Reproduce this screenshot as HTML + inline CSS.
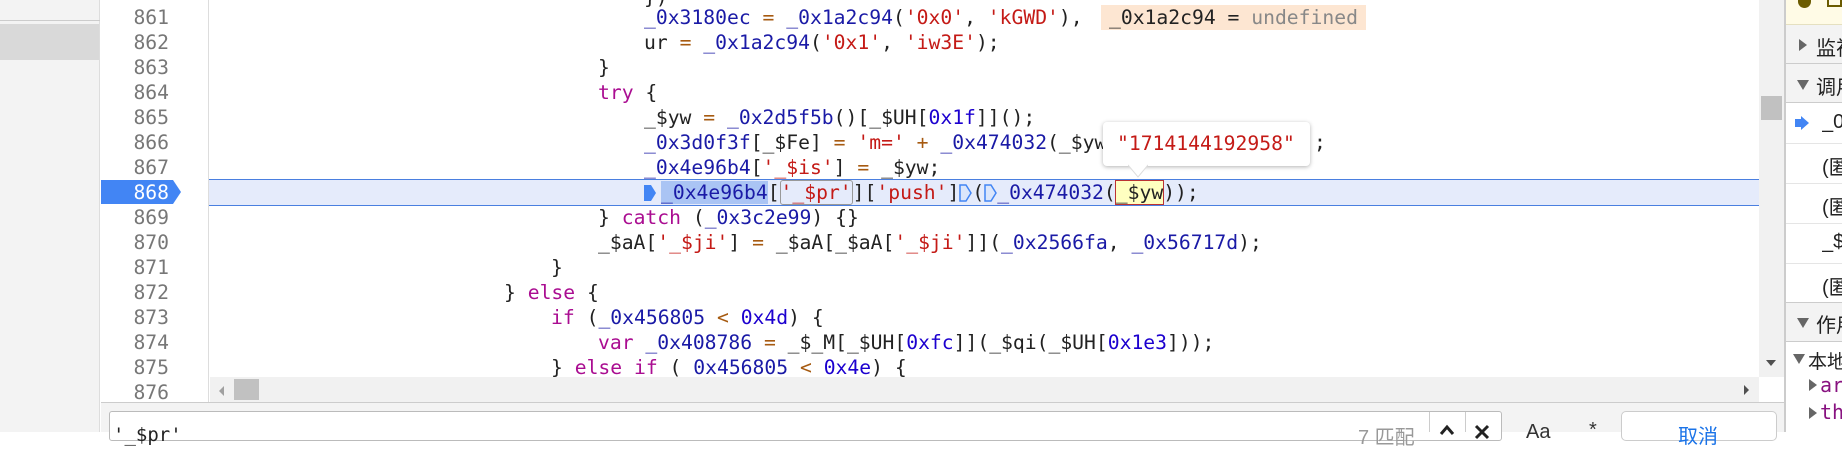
<!DOCTYPE html>
<html><head><meta charset="utf-8"><style>
*{margin:0;padding:0;box-sizing:border-box}
body{width:1842px;height:432px;overflow:hidden;background:#fff;position:relative;font-family:"DejaVu Sans Mono","Liberation Mono",monospace}
.a{position:absolute}
.code{position:absolute;left:209px;top:0;width:1550px;height:377px;overflow:hidden}
.ln{position:absolute;height:25px;line-height:25px;font-size:19.7px;white-space:pre;color:#222}
.v{color:#1a1aa6}.o{color:#a65a10}.s{color:#c41a16}.k{color:#aa0d91}.n{color:#1c00cf}
.num{position:absolute;left:100px;width:69px;text-align:right;height:25px;line-height:25px;font-size:19.7px;color:#777}
.cjk{font-family:"Liberation Sans","Noto Sans CJK SC",sans-serif}
.rp{position:absolute;left:1785px;width:57px;font-size:20px;color:#222;white-space:nowrap;overflow:hidden;font-family:"Liberation Sans","Noto Sans CJK SC",sans-serif}
</style></head><body>
<div class="a" style="left:0;top:0;width:100px;height:432px;background:#f3f3f3;border-right:1px solid #ddd"></div>
<div class="a" style="left:0;top:20px;width:100px;height:1px;background:#ccc"></div>
<div class="a" style="left:0;top:24px;width:99px;height:36px;background:#d9d9d9"></div>
<div class="a" style="left:100px;top:0;width:109px;height:402px;background:#fff;border-right:1px solid #ddd"></div>
<div class="num" style="top:5px">861</div>
<div class="num" style="top:30px">862</div>
<div class="num" style="top:55px">863</div>
<div class="num" style="top:80px">864</div>
<div class="num" style="top:105px">865</div>
<div class="num" style="top:130px">866</div>
<div class="num" style="top:155px">867</div>
<svg class="a" style="left:101px;top:180px" width="81" height="24"><path d="M0 0H72L80 12L72 24H0Z" fill="#4285f4"/></svg>
<div class="num" style="top:180px;color:#fff">868</div>
<div class="num" style="top:205px">869</div>
<div class="num" style="top:230px">870</div>
<div class="num" style="top:255px">871</div>
<div class="num" style="top:280px">872</div>
<div class="num" style="top:305px">873</div>
<div class="num" style="top:330px">874</div>
<div class="num" style="top:355px">875</div>
<div class="num" style="top:380px">876</div>
<div class="code">
<div class="a" style="left:0;top:179px;width:1550px;height:27px;background:#e5ebfb;border-top:1px solid #4a7fe0;border-bottom:1px solid #4a7fe0"></div>
<div class="ln" style="left:435px;top:-15px">})</div>
<div class="ln" style="left:435px;top:5px"><span class="v">_0x3180ec</span> <span class="o">=</span> <span class="v">_0x1a2c94</span>(<span class="s">'0x0'</span>, <span class="s">'kGWD'</span>),</div>
<div class="ln" style="left:892px;top:5px;background:#fde6d2;padding:0 8px">_0x1a2c94 = <span style="color:#888">undefined</span></div>
<div class="ln" style="left:435px;top:30px">ur <span class="o">=</span> <span class="v">_0x1a2c94</span>(<span class="s">'0x1'</span>, <span class="s">'iw3E'</span>);</div>
<div class="ln" style="left:389px;top:55px">}</div>
<div class="ln" style="left:389px;top:80px"><span class="k">try</span> {</div>
<div class="ln" style="left:435px;top:105px">_$yw <span class="o">=</span> <span class="v">_0x2d5f5b</span>()[_$UH[<span class="n">0x1f</span>]]();</div>
<div class="ln" style="left:435px;top:130px"><span class="v">_0x3d0f3f</span>[_$Fe] <span class="o">=</span> <span class="s">'m='</span> <span class="o">+</span> <span class="v">_0x474032</span>(_$yw</div>
<div class="ln" style="left:1105px;top:130px">;</div>
<div class="ln" style="left:435px;top:155px"><span class="v">_0x4e96b4</span>[<span class="s">'_$is'</span>] <span class="o">=</span> _$yw;</div>
<div class="ln" style="left:435px;top:180px"><svg width="13" height="18" style="vertical-align:-3px"><path d="M0 1H7L12 9L7 17H0Z" fill="#4285f4"/></svg><span class="v" style="background:#aac4f4;margin-left:4px">_0x4e96b4</span>[<span class="s" style="border:1px solid #999;border-radius:3px">'_$pr'</span>][<span class="s">'push'</span>]<svg width="13" height="18" style="vertical-align:-3px"><path d="M1 1H7L12 9L7 17H1Z" fill="#dbe6fb" stroke="#4285f4" stroke-width="1.5"/></svg>(<svg width="13" height="18" style="vertical-align:-3px"><path d="M1 1H7L12 9L7 17H1Z" fill="#dbe6fb" stroke="#4285f4" stroke-width="1.5"/></svg><span class="v">_0x474032</span>(<span style="background:#ffffc0;outline:1px solid #b33">_$yw</span>));</div>
<div class="ln" style="left:389px;top:205px">} <span class="k">catch</span> (<span class="v">_0x3c2e99</span>) {}</div>
<div class="ln" style="left:389px;top:230px">_$aA[<span class="s">'_$ji'</span>] <span class="o">=</span> _$aA[_$aA[<span class="s">'_$ji'</span>]](<span class="v">_0x2566fa</span>, <span class="v">_0x56717d</span>);</div>
<div class="ln" style="left:342px;top:255px">}</div>
<div class="ln" style="left:295px;top:280px">} <span class="k">else</span> {</div>
<div class="ln" style="left:342px;top:305px"><span class="k">if</span> (<span class="v">_0x456805</span> <span class="o">&lt;</span> <span class="n">0x4d</span>) {</div>
<div class="ln" style="left:389px;top:330px"><span class="k">var</span> <span class="v">_0x408786</span> <span class="o">=</span> _$_M[_$UH[<span class="n">0xfc</span>]](_$qi(_$UH[<span class="n">0x1e3</span>]));</div>
<div class="ln" style="left:342px;top:355px">} <span class="k">else if</span> (<span class="v">_0x456805</span> <span class="o">&lt;</span> <span class="n">0x4e</span>) {</div>
</div>
<div class="a" style="left:1103px;top:122px;width:207px;height:44px;background:#fff;border-radius:4px;box-shadow:0 1px 4px rgba(0,0,0,.3)"></div>
<svg class="a" style="left:1128px;top:164px" width="20" height="14"><path d="M0 1L10 13L20 1Z" fill="#fff"/><path d="M0 1L10 13L20 1" fill="none" stroke="#ddd"/></svg>
<div class="ln" style="left:1117px;top:131px;color:#c41a16">"1714144192958"</div>
<div class="a" style="left:1759px;top:0;width:26px;height:377px;background:#f1f1f1"></div>
<div class="a" style="left:1761px;top:96px;width:21px;height:24px;background:#c1c1c1"></div>
<svg class="a" style="left:1764px;top:358px" width="14" height="10"><path d="M2 2H12L7 8Z" fill="#505050"/></svg>
<div class="a" style="left:210px;top:377px;width:1549px;height:25px;background:#f1f1f1"></div>
<div class="a" style="left:1759px;top:377px;width:26px;height:25px;background:#fff"></div>
<svg class="a" style="left:216px;top:384px" width="10" height="14"><path d="M8 2V12L3 7Z" fill="#a0a0a0"/></svg>
<div class="a" style="left:234px;top:379px;width:25px;height:21px;background:#c1c1c1"></div>
<svg class="a" style="left:1742px;top:383px" width="10" height="14"><path d="M2 2V12L7 7Z" fill="#505050"/></svg>
<div class="a" style="left:101px;top:402px;width:1684px;height:30px;background:#f3f3f3;border-top:1px solid #ccc"></div>
<div class="a" style="left:109px;top:411px;width:1393px;height:30px;background:#fff;border:1px solid #bbb;border-radius:3px"></div>
<div class="ln" style="left:113px;top:423px;font-size:19px">'_$pr'</div>
<div class="a cjk" style="left:1358px;top:421px;font-size:20px;color:#999">7 匹配</div>
<div class="a" style="left:1429px;top:412px;width:1px;height:20px;background:#ccc"></div>
<div class="a" style="left:1465px;top:412px;width:1px;height:20px;background:#ccc"></div>
<svg class="a" style="left:1439px;top:424px" width="16" height="12"><path d="M2 10L8 3L14 10" fill="none" stroke="#222" stroke-width="3"/></svg>
<svg class="a" style="left:1474px;top:424px" width="16" height="16"><path d="M2 2L14 14M14 2L2 14" stroke="#222" stroke-width="3"/></svg>
<div class="a" style="left:1526px;top:421px;font-size:20px;color:#333;font-family:'Liberation Sans',sans-serif">Aa</div>
<div class="a" style="left:1589px;top:419px;font-size:20px;color:#333;font-family:'Liberation Sans',sans-serif">*</div>
<div class="a" style="left:1621px;top:411px;width:156px;height:30px;background:#fff;border:1px solid #ccc;border-radius:5px"></div>
<div class="a cjk" style="left:1678px;top:420px;font-size:20px;color:#1a73e8">取消</div>
<div class="a" style="left:1784px;top:0;width:2px;height:432px;background:#ccc"></div>
<div class="a" style="left:1786px;top:0;width:56px;height:25px;background:#fffbe6;border-bottom:1px solid #e5e0c0"></div>
<div class="a" style="left:1798px;top:0;width:13px;height:8px;background:#6b5b00;border-radius:0 0 7px 7px"></div>
<div class="a" style="left:1827px;top:0;width:15px;height:7px;border:2px solid #6b5b00;border-top:none"></div>
<div class="a" style="left:1786px;top:25px;width:56px;height:39px;background:#f3f3f3;border-bottom:1px solid #ccc"></div>
<svg class="a" style="left:1797px;top:37px" width="12" height="16"><path d="M2 2V14L10 8Z" fill="#666"/></svg>
<div class="rp" style="left:1816px;top:32px">监视</div>
<div class="a" style="left:1786px;top:64px;width:56px;height:39px;background:#f3f3f3;border-bottom:1px solid #ccc"></div>
<svg class="a" style="left:1795px;top:78px" width="16" height="14"><path d="M2 2H14L8 12Z" fill="#666"/></svg>
<div class="rp" style="left:1816px;top:71px">调用堆栈</div>
<svg class="a" style="left:1794px;top:115px" width="16" height="16"><path d="M1 4H7V1L15 8L7 15V12H1Z" fill="#4285f4"/></svg>
<div class="rp" style="left:1822px;top:111px">_0x</div>
<div class="a" style="left:1786px;top:143px;width:56px;height:1px;background:#e5e5e5"></div>
<div class="rp" style="left:1822px;top:151px">(匿名)</div>
<div class="a" style="left:1786px;top:183px;width:56px;height:1px;background:#e5e5e5"></div>
<div class="rp" style="left:1822px;top:191px">(匿名)</div>
<div class="a" style="left:1786px;top:223px;width:56px;height:1px;background:#e5e5e5"></div>
<div class="rp" style="left:1822px;top:231px">_$</div>
<div class="a" style="left:1786px;top:263px;width:56px;height:1px;background:#e5e5e5"></div>
<div class="rp" style="left:1822px;top:271px">(匿名)</div>
<div class="a" style="left:1786px;top:302px;width:56px;height:40px;background:#f3f3f3;border-top:1px solid #ccc;border-bottom:1px solid #ccc"></div>
<svg class="a" style="left:1795px;top:316px" width="16" height="14"><path d="M2 2H14L8 12Z" fill="#666"/></svg>
<div class="rp" style="left:1816px;top:309px">作用域</div>
<svg class="a" style="left:1792px;top:353px" width="14" height="12"><path d="M1 1H13L7 11Z" fill="#666"/></svg>
<div class="rp" style="left:1808px;top:347px;font-size:19px">本地</div>
<svg class="a" style="left:1808px;top:378px" width="10" height="14"><path d="M1 1V13L9 7Z" fill="#666"/></svg>
<div class="rp" style="left:1820px;top:373px;color:#881280;font-family:'DejaVu Sans Mono',monospace">ar</div>
<svg class="a" style="left:1808px;top:406px" width="10" height="14"><path d="M1 1V13L9 7Z" fill="#666"/></svg>
<div class="rp" style="left:1820px;top:400px;color:#881280;font-family:'DejaVu Sans Mono',monospace">th</div>
</body></html>
